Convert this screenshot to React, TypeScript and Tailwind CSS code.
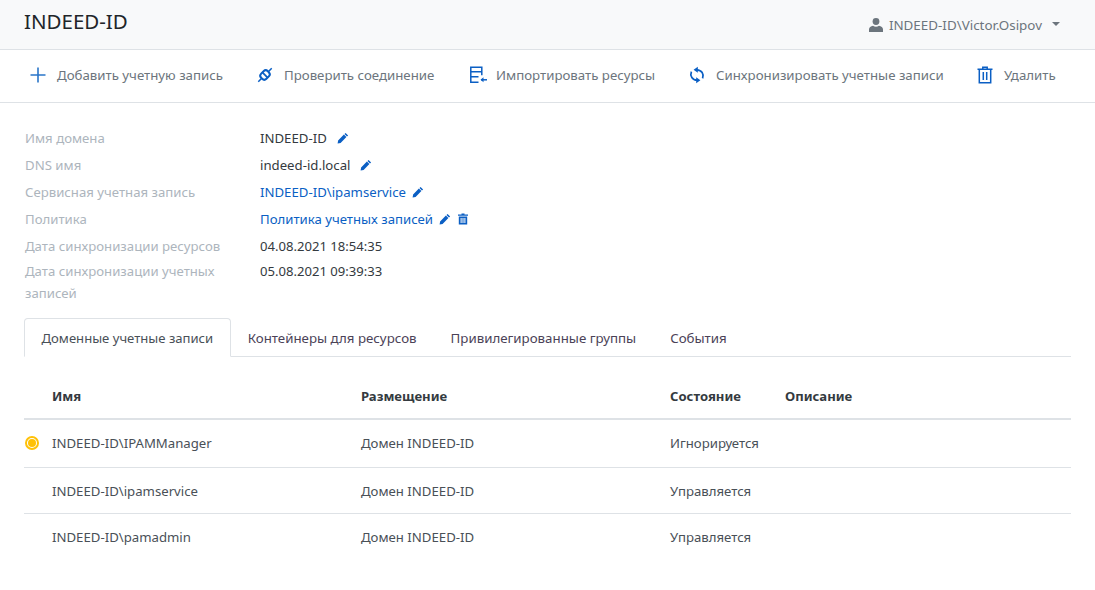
import React from 'react';

const font = { fontFamily: '"Noto Sans", sans-serif' };

const PencilIcon = () => (
  <svg viewBox="0 0 12 12" className="w-3 h-3 text-[#0b5fc4]" fill="currentColor">
    <path d="M8.6.9 11.1 3.4 10 4.500 7.500 2zM6.900 2.600 9.400 5.100 3.600 10.900.6 11.400 1.100 8.400z" />
  </svg>
);

const TrashIcon = () => (
  <svg viewBox="0 0 12 12" className="w-3 h-3 text-[#0b5fc4]" fill="currentColor">
    <path d="M1 1.500h3.500V.6h3v.9H11v1.300H1zM1.800 3.600h8.400V11.500H1.800zM3.600 5v5h1V5zM5.500 5v5h1V5zM7.400 5v5h1V5z" />
  </svg>
);

const PlusIcon = () => (
  <svg viewBox="0 0 18 18" className="w-[18px] h-[18px] text-[#2a75c9]" fill="currentColor">
    <path d="M8.200 1.500h1.600v6.700h6.700v1.600H9.800v6.700H8.200V9.800H1.500V8.200h6.700z" />
  </svg>
);

// plug halves on a diagonal, drawn flat and rotated
const PlugIcon = () => (
  <svg viewBox="0 0 18 18" className="w-[18px] h-[18px] text-[#0b5fc4]" fill="none" stroke="currentColor">
    <g transform="rotate(-45 9 9)">
      <rect x="4.300" y="5.300" width="9.400" height="7.400" rx="3" strokeWidth="2" />
      <path d="M9 5v8" strokeWidth="1.800" />
      <path d="M-0.500 9h4.500M14 9h4.500" strokeWidth="1.500" />
    </g>
  </svg>
);

const ImportIcon = () => (
  <svg viewBox="0 0 18 18" className="w-[18px] h-[18px] text-[#0b5fc4]" fill="none" stroke="currentColor" strokeWidth="1.500">
    <path d="M9.500 16.300H1.800V1.300h11v8M1.800 5.800h11M1.800 10.800h7.700" />
    <path d="M18 13.800h-6" />
    <path d="M14.500 11.300 11.500 13.800l3 2.500z" fill="currentColor" stroke="none" />
  </svg>
);

const SyncIcon = () => (
  <svg viewBox="0 0 18 18" className="w-[18px] h-[18px] text-[#0b5fc4]" fill="none" stroke="currentColor" strokeWidth="1.700">
    <path d="M14.600 12.300C16.300 8.200 13.600 4 9 3.800" />
    <path d="M3.400 5.700C1.700 9.800 4.400 14 9 14.200" />
    <path d="M9.800.8 5.600 3.800 9.800 6.800z" fill="currentColor" stroke="none" />
    <path d="M8.200 11.200 12.400 14.200 8.200 17.200z" fill="currentColor" stroke="none" />
  </svg>
);

const BigTrashIcon = () => (
  <svg viewBox="0 0 18 18" className="w-[18px] h-[18px] text-[#0b5fc4]" fill="none" stroke="currentColor" strokeWidth="1.500">
    <path d="M1.500 3.200h15M6.800 3V1.200h4.400V3M3.300 3.400v13.400h11.400V3.400" />
    <path d="M7.300 6v8M10.700 6v8" />
  </svg>
);

const UserIcon = () => (
  <svg viewBox="0 0 14 14" className="w-3.5 h-3.5 text-[#6c757d]" fill="currentColor">
    <circle cx="7" cy="3.500" r="3.400" />
    <path d="M0 14v-2.500C0 9.500 1.800 8.200 4 7.800c.9.600 1.900.9 3 .9s2.100-.3 3-.9c2.200.4 4 1.700 4 3.700V14z" />
  </svg>
);

const actions = [
  { label: 'Добавить учетную запись', icon: <PlusIcon />, width: 'w-[227px]', gap: 'gap-[10px]' },
  { label: 'Проверить соединение', icon: <PlugIcon />, width: 'w-[213px]', gap: 'gap-[10px]' },
  { label: 'Импортировать ресурсы', icon: <ImportIcon />, width: 'w-[219px]', gap: 'gap-[9px]' },
  { label: 'Синхронизировать учетные записи', icon: <SyncIcon />, width: 'w-[288px]', gap: 'gap-[10px]' },
  { label: 'Удалить', icon: <BigTrashIcon />, width: '', gap: 'gap-[10px]' },
];

const tabs = ['Контейнеры для ресурсов', 'Привилегированные группы', 'События'];

const accounts = [
  { name: 'INDEED-ID\\IPAMManager', state: 'Игнорируется', warn: true, height: 'h-[48px] pb-px' },
  { name: 'INDEED-ID\\ipamservice', state: 'Управляется', warn: false, height: 'h-[46px]' },
  { name: 'INDEED-ID\\pamadmin', state: 'Управляется', warn: false, height: 'h-[46px]' },
];

export default function App() {
  return (
    <div className="w-[1095px] h-[590px] bg-white overflow-hidden text-[13.2px] leading-5 text-[#343a40]" style={font}>
      <header className="h-[50px] bg-[#f8f9fa] border-b border-[#dee2e6] flex items-center justify-between pl-6 pr-[35px]">
        <h1 className="text-[20.5px] font-normal text-[#212529] -mt-[7px]">INDEED-ID</h1>
        <div className="flex items-center gap-1.5 text-[#6c757d] text-[13.4px] -ml-px">
          <UserIcon />
          <span>INDEED-ID\Victor.Osipov</span>
          <span className="ml-1 w-0 h-0 border-x-[4px] border-x-transparent border-t-[4px] border-t-[#6c757d] -mt-[2px]" />
        </div>
      </header>

      <div className="h-[53px] border-b border-[#dee2e6] flex items-center pl-[29px] pb-0.5 text-[13.25px]">
        {actions.map((a) => (
          <div key={a.label} className={`flex items-center text-[#6c757d] ${a.gap} ${a.width}`}>
            {a.icon}
            <span>{a.label}</span>
          </div>
        ))}
      </div>

      <div className="pl-[25px] pt-[25px] grid grid-cols-[235px_1fr] grid-rows-[27px_27px_27px_27px_24px_44px]">
        <div className="text-[#adb5bd]">Имя домена</div>
        <div className="flex items-start gap-2.5">INDEED-ID <span className="pt-1"><PencilIcon /></span></div>
        <div className="text-[#adb5bd]">DNS имя</div>
        <div className="flex items-start gap-2.5">indeed-id.local <span className="pt-1"><PencilIcon /></span></div>
        <div className="text-[#adb5bd]">Сервисная учетная запись</div>
        <div className="flex items-start gap-1.5 text-[#0b5fc4]">INDEED-ID\ipamservice <span className="pt-1"><PencilIcon /></span></div>
        <div className="text-[#adb5bd]">Политика</div>
        <div className="flex items-start gap-1.5 text-[#0b5fc4]">
          Политика учетных записей <span className="pt-1"><PencilIcon /></span>
          <span className="pt-1"><TrashIcon /></span>
        </div>
        <div className="text-[#adb5bd]">Дата синхронизации ресурсов</div>
        <div className="text-[13.1px]">04.08.2021 18:54:35</div>
        <div className="text-[#adb5bd] w-[205px] leading-[22px]">Дата синхронизации учетных записей</div>
        <div className="text-[13.1px] leading-[22px]">05.08.2021 09:39:33</div>
      </div>

      <div className="mx-6 mt-[14px] flex border-b border-[#dee2e6] h-[39px] text-[13.1px]">
        <div className="h-[39px] px-[16.5px] flex items-center text-[#495057] bg-white border border-[#dee2e6] border-b-white rounded-t">
          Доменные учетные записи
        </div>
        {tabs.map((t) => (
          <div key={t} className="px-[17px] pt-px flex items-center text-[13.3px] text-[#4b4257]">{t}</div>
        ))}
      </div>

      <div className="mx-6 mt-4">
        <div className="grid grid-cols-[28px_309px_309px_115px_1fr] h-[47px] items-center border-b-2 border-[#dee2e6] font-bold text-[13.1px] text-[#343a40]">
          <div />
          <div>Имя</div>
          <div>Размещение</div>
          <div>Состояние</div>
          <div>Описание</div>
        </div>
        {accounts.map((r) => (
          <div key={r.name} className={`grid grid-cols-[28px_309px_309px_115px_1fr] items-center border-b border-[#dee2e6] last:border-b-0 ${r.height}`}>
            <div>
              {r.warn && (
                <span className="flex items-center justify-center w-3.5 h-3.5 rounded-full border-2 border-[#ffc107] ml-px">
                  <span className="w-2 h-2 rounded-full bg-[#ffc107]" />
                </span>
              )}
            </div>
            <div className="text-[#495057]">{r.name}</div>
            <div className="text-[#495057]">Домен INDEED-ID</div>
            <div className="text-[#495057]">{r.state}</div>
            <div />
          </div>
        ))}
      </div>
    </div>
  );
}
